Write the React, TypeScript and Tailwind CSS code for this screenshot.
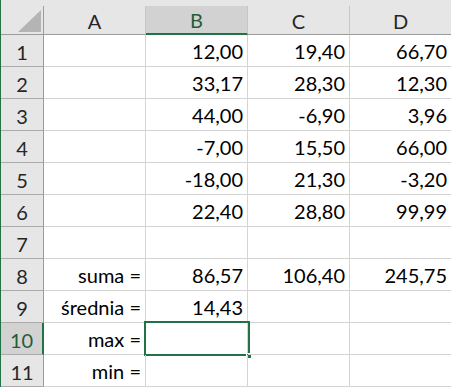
import React from "react";

const rows: string[][] = [
  ["", "12,00", "19,40", "66,70"],
  ["", "33,17", "28,30", "12,30"],
  ["", "44,00", "-6,90", "3,96"],
  ["", "-7,00", "15,50", "66,00"],
  ["", "-18,00", "21,30", "-3,20"],
  ["", "22,40", "28,80", "99,99"],
  ["", "", "", ""],
  ["suma =", "86,57", "106,40", "245,75"],
  ["średnia =", "14,43", "", ""],
  ["max =", "", "", ""],
  ["min =", "", "", ""],
];

const cols = ["A", "B", "C", "D"];
const widths = ["w-[102px]", "w-[102px]", "w-[102px]", "flex-1"];

export default function App() {
  return (
    <div
      className="flex w-[451px] h-[387px] overflow-hidden bg-white text-[20px] text-black"
      style={{ fontFamily: "Lato, 'Open Sans', sans-serif" }}
    >
      <div className="w-px shrink-0 bg-[#217346]" />
      <div className="flex flex-col flex-1 min-w-0">
        <div className="h-[6px] shrink-0 bg-[#e6e6e6]" />
        {/* header */}
        <div className="flex h-[29px] shrink-0 bg-[#e6e6e6] text-[#262626]">
          <div className="relative w-[43px] shrink-0 border-r border-b border-[#9b9b9b]">
            <svg className="absolute left-[17px] top-[4px]" width="23" height="23" viewBox="0 0 23 23">
              <polygon points="23,0 23,22 0,22" fill="#b4b4b4" />
            </svg>
          </div>
          {cols.map((c, i) => {
            const sel = c === "B";
            return (
              <div
                key={c}
                className={`${widths[i]} shrink-0 flex items-center justify-center leading-none ${
                  i < 3 ? "border-r border-[#c6c6c6]" : ""
                } ${
                  sel
                    ? "bg-[#d2d2d2] text-[#1e5e3a] border-b-2 border-b-[#217346]"
                    : "border-b border-b-[#9b9b9b]"
                }`}
              >
                <span className="pt-[1px]">{c}</span>
              </div>
            );
          })}
        </div>
        {rows.map((r, ri) => {
          const selRow = ri === 9;
          return (
            <div key={ri} className="flex h-[32px] shrink-0">
              <div
                className={`w-[43px] shrink-0 flex items-center justify-center border-b border-[#ababab] ${
                  selRow
                    ? "bg-[#d2d2d2] text-[#1e5e3a] border-r-2 border-r-[#217346]"
                    : "bg-[#e6e6e6] text-[#262626] border-r border-r-[#9b9b9b]"
                }`}
              >
                <span className="pt-[2px]">{ri + 1}</span>
              </div>
              {r.map((v, ci) => {
                const sel = selRow && ci === 1;
                return (
                  <div
                    key={ci}
                    className={`${widths[ci]} shrink-0 relative flex items-end justify-end pb-[3px] pr-[4px] border-b border-[#d4d4d4] ${
                      ci < 3 ? "border-r" : ""
                    } leading-[24px] whitespace-nowrap`}
                  >
                    {v}
                    {sel && (
                      <>
                        <div className="absolute left-[-2px] top-[-2px] right-[-3px] bottom-[-2px] border-2 border-[#217346]" />
                        <div className="absolute right-[-5px] bottom-[-5px] w-[6px] h-[6px] bg-[#217346] border border-white" />
                      </>
                    )}
                  </div>
                );
              })}
            </div>
          );
        })}
      </div>
    </div>
  );
}
